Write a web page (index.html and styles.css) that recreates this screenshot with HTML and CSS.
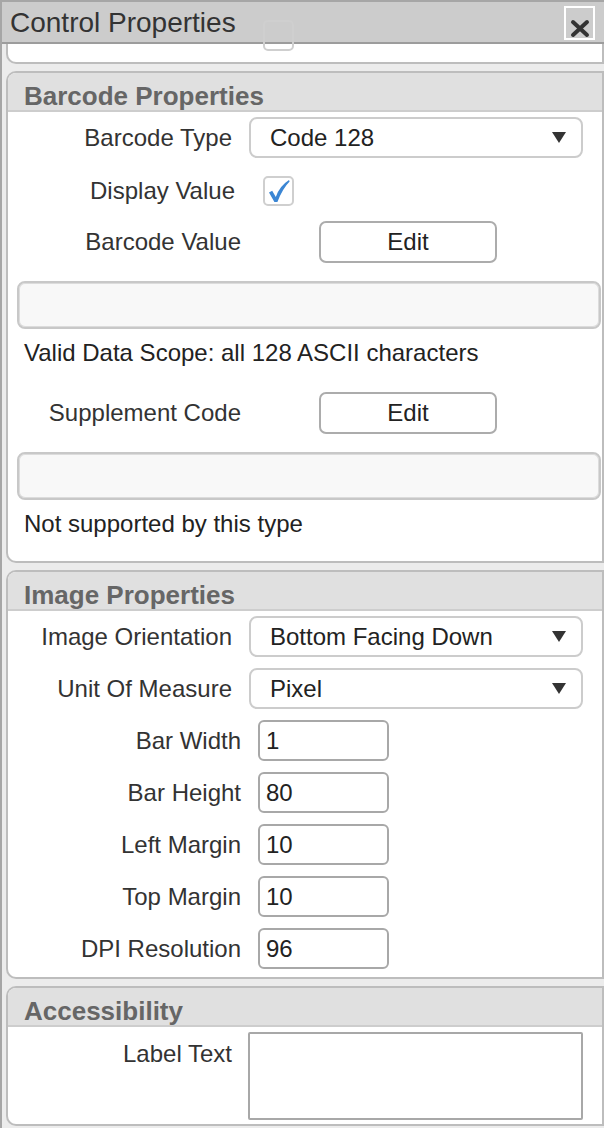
FILE: index.html
```html
<!DOCTYPE html>
<html lang="en">
<head>
    <meta charset="UTF-8">
    <meta name="viewport" content="width=device-width, initial-scale=1.0">
    <title>Control Properties</title>
    <link rel="stylesheet" href="styles.css">
</head>
<body>
    <div class="panel">
        <div class="panel-header">
            <div class="panel-title">Control Properties</div>
            <button class="close-button" title="Close">
                <svg width="27" height="30" viewBox="0 0 27 30">
                    <path d="M7 14 L21 27 M21 14 L7 27" stroke="#333" stroke-width="4" stroke-linecap="round"/>
                </svg>
            </button>
        </div>

        <div class="panel-body">
            <div class="section section-clipped">
                <div class="clipped-check"></div>
            </div>

            <div class="section">
                <div class="section-title">Barcode Properties</div>
                <div class="section-body section-barcode">
                    <div class="field-row row-select">
                        <div class="field-label">Barcode Type</div>
                        <div class="select-box">
                            <span>Code 128</span>
                            <span class="select-arrow"></span>
                        </div>
                    </div>
                    <div class="field-row row-check">
                        <div class="field-label">Display Value</div>
                        <div class="check-box">
                            <svg width="22" height="24" viewBox="0 0 22 24">
                                <path d="M1 13.5 L4.2 11.8 L7.8 18 Q11.5 7 21 1 L21.6 2.4 Q14.5 9.5 9.4 23 L6.4 23 Z" fill="#3b86d4"/>
                            </svg>
                        </div>
                    </div>
                    <div class="field-row row-edit">
                        <div class="field-label">Barcode Value</div>
                        <button class="edit-button">Edit</button>
                    </div>
                    <div class="wide-input"></div>
                    <div class="note">Valid Data Scope: all 128 ASCII characters</div>
                    <div class="field-row row-edit row-edit-second">
                        <div class="field-label">Supplement Code</div>
                        <button class="edit-button">Edit</button>
                    </div>
                    <div class="wide-input"></div>
                    <div class="note">Not supported by this type</div>
                </div>
            </div>

            <div class="section">
                <div class="section-title">Image Properties</div>
                <div class="section-body section-image">
                    <div class="field-row row-select">
                        <div class="field-label">Image Orientation</div>
                        <div class="select-box">
                            <span>Bottom Facing Down</span>
                            <span class="select-arrow"></span>
                        </div>
                    </div>
                    <div class="field-row row-select">
                        <div class="field-label">Unit Of Measure</div>
                        <div class="select-box">
                            <span>Pixel</span>
                            <span class="select-arrow"></span>
                        </div>
                    </div>
                    <div class="field-row row-input">
                        <div class="field-label">Bar Width</div>
                        <div class="text-input">1</div>
                    </div>
                    <div class="field-row row-input">
                        <div class="field-label">Bar Height</div>
                        <div class="text-input">80</div>
                    </div>
                    <div class="field-row row-input">
                        <div class="field-label">Left Margin</div>
                        <div class="text-input">10</div>
                    </div>
                    <div class="field-row row-input">
                        <div class="field-label">Top Margin</div>
                        <div class="text-input">10</div>
                    </div>
                    <div class="field-row row-input">
                        <div class="field-label">DPI Resolution</div>
                        <div class="text-input">96</div>
                    </div>
                </div>
            </div>

            <div class="section">
                <div class="section-title">Accessibility</div>
                <div class="section-body section-access">
                    <div class="field-row row-area">
                        <div class="field-label">Label Text</div>
                        <div class="text-area"></div>
                    </div>
                </div>
            </div>
        </div>
    </div>
</body>
</html>
```

FILE: styles.css
```css
body {
    margin: 0;
    font-family: "Liberation Sans", Arial, sans-serif;
    background-color: #ececec;
    color: #333;
}
.panel {
    width: 602px;
    height: 1126px;
    border-left: 2px solid #a6a6a6;
    border-top: 2px solid #a6a6a6;
    background: #ececec;
    overflow: hidden;
}
.panel-header {
    display: flex;
    justify-content: space-between;
    align-items: flex-start;
    height: 40px;
    background: #cccccc;
    border-bottom: 2px solid #9c9c9c;
}
.panel-title {
    font-size: 28px;
    line-height: 41px;
    padding-left: 8px;
    color: #333;
}
.close-button {
    box-sizing: border-box;
    width: 31px;
    height: 34px;
    margin-top: 4px;
    margin-right: 9px;
    padding: 0;
    border: 2px solid #fff;
    background: #cccccc;
    display: flex;
}
.panel-body {
    padding-left: 4px;
}
.section {
    background: #fff;
    border: 2px solid #bdbdbd;
    border-right: none;
    border-radius: 10px 0 0 10px;
    margin-bottom: 7px;
    position: relative;
}
.section::after {
    content: "";
    position: absolute;
    top: -2px;
    bottom: -2px;
    right: 0;
    width: 2px;
    background: #bdbdbd;
}
.section-clipped {
    height: 18px;
    border-top: none;
    border-radius: 0 0 0 10px;
}
.section-clipped::after {
    top: 0;
}
.clipped-check {
    position: absolute;
    left: 255px;
    top: -24px;
    width: 27px;
    height: 27px;
    border: 2px solid #cfcfcf;
    border-radius: 5px;
}
.section-title {
    height: 39px;
    padding: 9px 0 0 16px;
    box-sizing: border-box;
    line-height: 28px;
    background: #e0e0e0;
    border-bottom: 2px solid #cdcdcd;
    border-radius: 8px 0 0 0;
    font-size: 26px;
    font-weight: bold;
    color: #666;
}
.section-body {
    font-size: 24px;
}
.section-barcode {
    padding: 5px 0 23px 0;
}
.section-image {
    padding: 5px 0 8px 0;
}
.section-access {
    padding: 5px 0 4px 0;
}
.field-row {
    display: flex;
    align-items: center;
}
.field-label {
    text-align: right;
    color: #333;
    line-height: 28px;
    white-space: nowrap;
}
.row-select .field-label { width: 224px; margin-right: 17px; }
.row-check .field-label { width: 227px; margin-right: 28px; }
.row-edit .field-label { width: 233px; margin-right: 78px; }
.row-input .field-label { width: 233px; margin-right: 17px; }
.row-area .field-label { width: 224px; margin-right: 16px; }

.row-select + .row-select,
.row-select + .row-input,
.row-input + .row-input {
    margin-top: 11px;
}
.row-check { margin-top: 18px; }
.row-edit { margin-top: 15px; }
.row-edit-second { margin-top: 25px; }
.row-area { align-items: flex-start; }
.row-area .field-label { margin-top: 8px; }

.select-box {
    box-sizing: border-box;
    width: 334px;
    height: 41px;
    border: 2px solid #cccccc;
    border-radius: 8px;
    display: flex;
    align-items: center;
    justify-content: space-between;
    padding: 0 15px 0 19px;
    color: #222;
}
.select-arrow {
    width: 0;
    height: 0;
    border-left: 7px solid transparent;
    border-right: 7px solid transparent;
    border-top: 11px solid #333;
}
.check-box {
    box-sizing: border-box;
    width: 31px;
    height: 30px;
    border: 2px solid #cfcfcf;
    border-radius: 5px;
    display: flex;
    align-items: center;
    justify-content: center;
}
.edit-button {
    box-sizing: border-box;
    width: 178px;
    height: 42px;
    border: 2px solid #acacac;
    border-radius: 7px;
    background: #fff;
    font-family: "Liberation Sans", Arial, sans-serif;
    font-size: 24px;
    color: #222;
    padding: 0;
}
.wide-input {
    box-sizing: border-box;
    width: 584px;
    height: 48px;
    margin: 19px 0 0 9px;
    background: #f8f8f8;
    border: 2px solid #c8c8c8;
    border-radius: 8px;
    box-shadow: inset 0 0 0 1px #dcdcdc;
}
.wide-input + .note {
    margin-top: 10px;
}
.note {
    padding-left: 16px;
    line-height: 28px;
    color: #222;
}
.row-edit + .wide-input {
    margin-top: 18px;
}
.text-input {
    box-sizing: border-box;
    width: 131px;
    height: 41px;
    border: 2px solid #a8a8a8;
    border-radius: 6px;
    padding-left: 6px;
    line-height: 37px;
    color: #222;
}
.text-area {
    box-sizing: border-box;
    width: 335px;
    height: 88px;
    border: 2px solid #a8a8a8;
    border-radius: 2px;
}
```
